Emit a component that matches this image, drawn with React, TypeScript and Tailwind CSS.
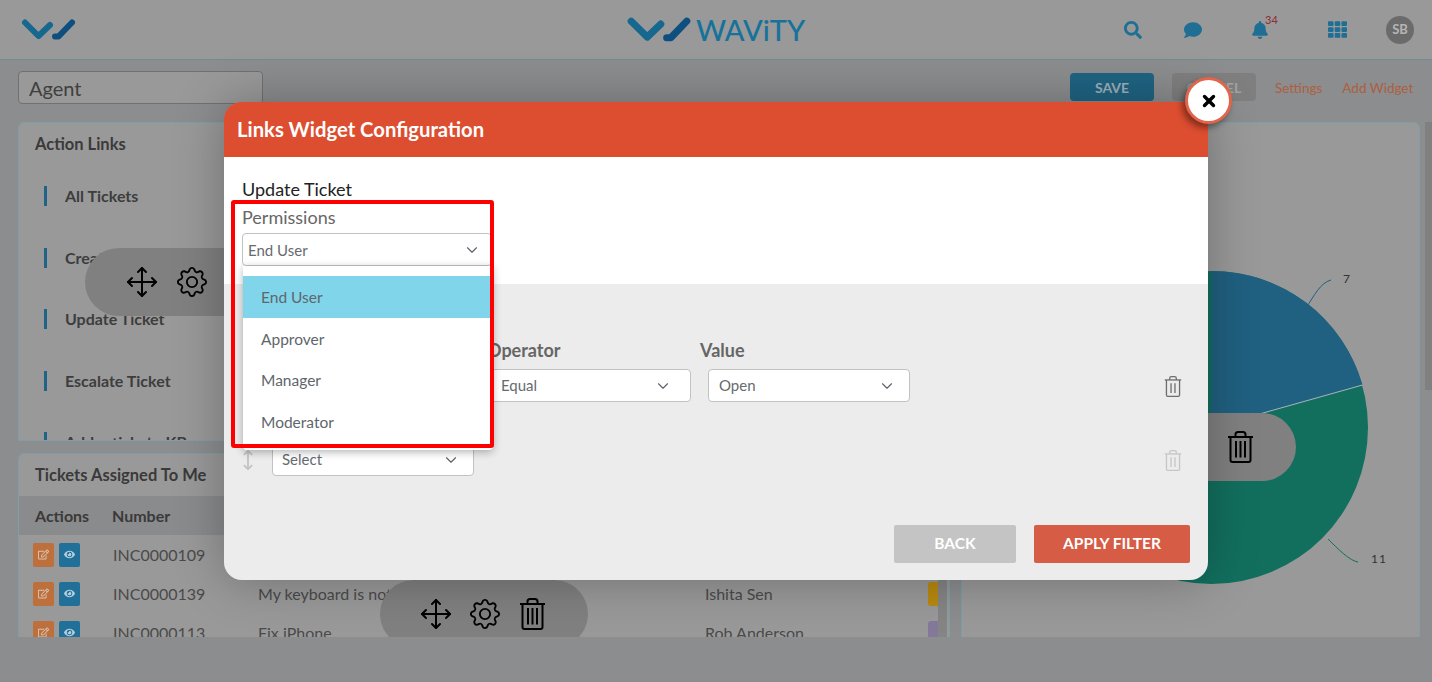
import { ChevronDown, X } from "lucide-react";
import { BsGear } from "react-icons/bs";
import { FaBell, FaComment, FaEye, FaRegEdit, FaSearch, FaTh } from "react-icons/fa";

const LINKS = ["All Tickets", "Create Ticket", "Update Ticket", "Escalate Ticket", "Add article to KB"];

const TICKETS = [
  { number: "INC0000109", title: "", owner: "", badge: "" },
  { number: "INC0000139", title: "My keyboard is not working", owner: "Ishita Sen", badge: "bg-[#b98a10]" },
  { number: "INC0000113", title: "Fix iPhone", owner: "Rob Anderson", badge: "bg-[#85799a]" },
];

function Logo({ className }: { className: string }) {
  return (
    <svg viewBox="0 0 54 22" className={className} fill="none" strokeLinecap="round" strokeLinejoin="round">
      <path d="M3.5 3.5 L17 17 L28.5 6" stroke="#17688f" strokeWidth="6" />
      <path d="M33.5 17.5 L37 17.5 L50.5 3.5" stroke="#0f4f80" strokeWidth="6" />
    </svg>
  );
}

function MoveIcon() {
  return (
    <svg viewBox="0 0 32 32" className="h-8 w-8" fill="none" stroke="currentColor" strokeWidth="2" strokeLinecap="round" strokeLinejoin="round">
      <path d="M16 2 V30 M2 16 H30" />
      <path d="M12 6 L16 2 L20 6 M12 26 L16 30 L20 26 M6 12 L2 16 L6 20 M26 12 L30 16 L26 20" />
    </svg>
  );
}

function TrashIcon({ className, barCount = 3 }: { className: string; barCount?: 2 | 3 }) {
  return (
    <svg viewBox="0 0 27 32" className={className} fill="none" stroke="currentColor" strokeWidth="2">
      <path d="M1 6 H26" />
      <path d="M8.5 6 V3.5 Q8.5 1 11 1 H16 Q18.5 1 18.5 3.5 V6" />
      <path d="M3.5 6 V29 Q3.5 31 5.5 31 H21.5 Q23.5 31 23.5 29 V6" />
      {barCount === 3 ? (
        <path d="M9 10 V26.5 M13.5 10 V26.5 M18 10 V26.5" />
      ) : (
        <path d="M10.5 11 V26 M16.5 11 V26" />
      )}
    </svg>
  );
}

function Pill({ className, children }: { className: string; children: React.ReactNode }) {
  return (
    <div className={`absolute z-10 flex h-[68px] items-center rounded-full bg-[#808080] text-black ${className}`}>
      {children}
    </div>
  );
}

function SelectBox({ label, className }: { label: string; className: string }) {
  return (
    <div
      className={`flex h-[33px] items-center justify-between rounded-[4px] border border-[#c2c2c2] bg-white text-[15px] text-[#666b70] ${className}`}
    >
      <span>{label}</span>
      <ChevronDown size={18} strokeWidth={1.5} className="text-[#5c6268]" />
    </div>
  );
}

function UpDownArrow() {
  return (
    <svg viewBox="0 0 12 24" className="h-[22px] w-[12px]" fill="none" stroke="#c4c4c4" strokeWidth="2">
      <path d="M6 2 V22 M1.5 6.5 L6 2 L10.5 6.5 M1.5 17.5 L6 22 L10.5 17.5" />
    </svg>
  );
}

function ActionLinksCard() {
  return (
    <section className="relative h-[319px] shrink-0 overflow-hidden rounded-t-[6px] border border-[#7f9ea9] bg-[#999999]">
      <h2 className="pl-4 pt-[10px] text-[16.5px] leading-[22px] font-bold text-[#3a3a3a]">Action Links</h2>
      <ul className="mt-[31px] flex flex-col gap-[41.5px] pl-[25px]">
        {LINKS.map((link) => (
          <li key={link} className="flex h-5 items-center gap-[18px]">
            <span className="h-5 w-[3px] bg-[#1f6487]" />
            <span className="text-[16px] font-bold text-[#3d3d3d]">{link}</span>
          </li>
        ))}
      </ul>
      <Pill className="left-[66px] top-[125px] w-[190px] gap-[19px] pl-[41px]">
        <MoveIcon />
        <BsGear size={30} />
      </Pill>
    </section>
  );
}

function TicketsCard() {
  return (
    <section className="relative grow rounded-t-[6px] border border-[#7f9ea9] bg-[#999999]">
      <h2 className="flex h-[42px] items-center pl-4 pt-px text-[16.5px] font-bold text-[#3a3a3a]">Tickets Assigned To Me</h2>
      <div className="grid h-[39px] grid-cols-[77px_146px_447px_224px] items-center bg-[#8a8b8d] pl-4 pt-px text-[16px] font-bold text-[#3a3a3a]">
        <span>Actions</span>
        <span>Number</span>
      </div>
      {TICKETS.map((t) => (
        <div
          key={t.number}
          className="grid h-[39px] grid-cols-[79px_146px_447px_223px_11px] items-center pl-[14px] text-[16px] text-[#4a4a4a]"
        >
          <div className="flex gap-[5px]">
            <span className="flex h-6 w-[21px] items-center justify-center rounded-[2px] bg-[#bd6f3c] text-[#d9c5b5]">
              <FaRegEdit size={11} />
            </span>
            <span className="flex h-6 w-[21px] items-center justify-center rounded-[2px] bg-[#20709a] text-[#b5cfdc]">
              <FaEye size={11} />
            </span>
          </div>
          <span className="pl-[1px]">{t.number}</span>
          <span className="whitespace-nowrap">{t.title}</span>
          <span>{t.owner}</span>
          {t.badge ? <span className={`h-6 w-[11px] rounded-l-[3px] ${t.badge}`} /> : <span />}
        </div>
      ))}
      <div className="absolute bottom-0 right-[2px] top-[42px] w-[9px] bg-[#858585]" />
      <Pill className="left-[361px] top-[126px] w-[208px] gap-[18px] pl-[40px]">
        <MoveIcon />
        <BsGear size={30} />
        <TrashIcon className="ml-px h-[32px] w-[27px]" />
      </Pill>
    </section>
  );
}

function ChartCard() {
  return (
    <section className="relative h-[560px] w-[459px] shrink-0 rounded-t-[6px] border border-[#7f9ea9] bg-[#999999]">
      <svg viewBox="0 0 457 558" className="block h-[558px] w-[457px]">
        <circle cx="249.5" cy="304.5" r="156.5" fill="#126f5e" />
        <path d="M249.5 304.5 V148 A156.5 156.5 0 0 1 400.5 262 Z" fill="#206080" />
        <path d="M249.5 304.5 L400.5 262" fill="none" stroke="#a9b4b8" strokeWidth="1" />
        <path d="M344 185 C352 173 358 160 369 157" fill="none" stroke="#206080" />
        <path d="M366 416 C376 426 388 438 396 439" fill="none" stroke="#126f5e" />
        <text x="381" y="160" fontSize="12" fill="#333">7</text>
        <text x="409" y="440" fontSize="12" fill="#333" letterSpacing="1">11</text>
      </svg>
      <Pill className="left-[163px] top-[290px] w-[171px] pl-[102px]">
        <TrashIcon className="h-[32px] w-[27px]" />
      </Pill>
    </section>
  );
}

function ConfigModal() {
  return (
    <div className="absolute left-[224px] top-[102px] z-20 flex h-[478px] w-[984px] flex-col rounded-[18px] shadow-[0_0_50px_rgba(0,0,0,0.28)]">
      <header className="flex h-[55px] shrink-0 items-center rounded-t-[18px] bg-[#dd4d2f] pl-[13px] text-[20.25px] font-bold text-white">
        Links Widget Configuration
      </header>

      <div className="h-[127px] shrink-0 bg-white pl-[18px] pt-[21px]">
        <div className="text-[18px] leading-[22px] text-[#222222]">Update Ticket</div>
        <div className="mt-[6px] text-[18px] leading-[22px] text-[#666666]">Permissions</div>
        <SelectBox label="End User" className="mt-[5px] w-[250px] pl-[5px] pr-[10px] pt-px" />
      </div>

      <div className="grow rounded-b-[18px] bg-[#ececec] pl-[18px] pr-[18px] pt-[55px]">
        <div className="flex items-end">
          <div className="flex h-[33px] w-[30px] items-center">
            <UpDownArrow />
          </div>
          <div className="mr-[15px] w-[202px]">
            <SelectBox label="" className="w-[202px] pl-[9px] pr-[12px]" />
          </div>
          <div className="mr-[17px] w-[202px]">
            <div className="-ml-[2px] mb-2 text-[18px] leading-[22px] font-bold text-[#666666]">Operator</div>
            <SelectBox label="Equal" className="w-[202px] pl-[11px] pr-[18px]" />
          </div>
          <div className="w-[202px]">
            <div className="-ml-2 mb-2 text-[18px] leading-[22px] font-bold text-[#666666]">Value</div>
            <SelectBox label="Open" className="w-[202px] pl-[10px] pr-[13px]" />
          </div>
          <div className="ml-auto flex h-[33px] items-center pr-[8px] pt-[2px] text-[#6e6e6e]">
            <TrashIcon className="h-[21px] w-[18px]" barCount={2} />
          </div>
        </div>

        <div className="mt-[41px] flex items-center">
          <div className="flex h-[33px] w-[30px] items-center">
            <UpDownArrow />
          </div>
          <SelectBox label="Select" className="w-[202px] pl-[9px] pr-[13px] text-[#7c8287]" />
          <div className="ml-auto flex h-[33px] items-center pr-[8px] pt-[2px] text-[#c6c6c6]">
            <TrashIcon className="h-[21px] w-[18px]" barCount={2} />
          </div>
        </div>

        <div className="mt-[49px] flex justify-end gap-[18px] text-[15.5px] font-bold text-white">
          <button className="h-[38px] w-[122px] rounded-[2px] bg-[#c4c4c4]">BACK</button>
          <button className="h-[38px] w-[156px] rounded-[2px] bg-[#d65c45]">APPLY FILTER</button>
        </div>
      </div>

      {/* open permissions menu */}
      <ul className="absolute left-[19px] top-[164px] h-[184px] w-[250px] rounded-b-[4px] bg-white pt-[10px] text-[15.5px] text-[#5f666c] shadow-[0_2px_8px_rgba(0,0,0,0.3)]">
        <li className="flex h-[42px] items-center bg-[#80d5ea] pl-[18px] pt-[2px]">End User</li>
        <li className="flex h-[41px] items-center pl-[18px] pt-[2px]">Approver</li>
        <li className="flex h-[42px] items-center pl-[18px] pt-[2px]">Manager</li>
        <li className="flex h-[41px] items-center pl-[18px] pt-[2px]">Moderator</li>
      </ul>

      {/* callout round the permissions field */}
      <div className="absolute left-[7px] top-[98px] h-[248px] w-[263px] rounded-[3px] border-[4px] border-[#ff0000]" />

      <button className="absolute left-[961px] top-[-25px] flex h-[47px] w-[47px] items-center justify-center rounded-full border-[3px] border-[#e0654a] bg-white text-black shadow-[-3px_4px_6px_rgba(0,0,0,0.4)]">
        <X size={18} strokeWidth={4.5} />
      </button>
    </div>
  );
}

export default function App() {
  return (
    <div className="relative flex h-[682px] w-[1432px] flex-col overflow-hidden bg-[#8c8d8f] font-['Lato','Liberation_Sans',sans-serif]">
      <header className="flex h-[60px] shrink-0 items-center border-b border-[#6f8c96] bg-[#999999] pl-[21px] pr-[18px]">
        <Logo className="h-[22px] w-[55px]" />
        <div className="ml-[551px] flex items-center gap-[5px]">
          <Logo className="h-[26px] w-[64px]" />
          <span className="text-[29px] leading-none font-medium text-[#17729a]">WAViTY</span>
        </div>
        <div className="ml-auto flex items-center text-[#1f6f95]">
          <FaSearch size={18} />
          <FaComment size={18} className="ml-[42px]" />
          <span className="relative ml-[49px]">
            <FaBell size={18} />
            <span className="absolute left-[14px] top-[-7px] text-[11px] leading-none text-[#8f2d36]">34</span>
          </span>
          <FaTh size={19} className="ml-[59px]" />
          <span className="ml-[39px] flex h-7 w-7 items-center justify-center rounded-full bg-[#6b6b6b] text-[13px] font-bold text-[#b5b5b5]">
            SB
          </span>
        </div>
      </header>

      <div className="flex h-[62px] shrink-0 items-start pl-[18px] pt-[11px]">
        <div className="flex h-[33px] w-[245px] items-center rounded-[4px] border border-[#707172] bg-[#999999] pl-[10px] text-[20px] text-[#3f3f3f]">
          Agent
        </div>
        <button className="ml-[807px] mt-[2px] h-[28px] w-[84px] rounded-[4px] bg-[#1f6483] text-[14px] font-bold text-[#9fb0b9]">
          SAVE
        </button>
        <button className="ml-[18px] mt-[2px] h-[28px] w-[84px] rounded-[4px] bg-[#7f7f7f] text-[14px] font-bold text-[#a3a3a3]">
          CANCEL
        </button>
        <span className="ml-[19px] mt-[7px] text-[13.5px] text-[#ad5f40]">Settings</span>
        <span className="ml-[20px] mt-[7px] text-[13.5px] text-[#ad5f40]">Add Widget</span>
      </div>

      <main className="flex h-[515px] shrink-0 overflow-hidden pl-[18px]">
        <div className="flex w-[932px] shrink-0 flex-col gap-[12px]">
          <ActionLinksCard />
          <TicketsCard />
        </div>
        <div className="ml-[11px]">
          <ChartCard />
        </div>
        <div className="ml-[5px] h-[268px] w-[7px] shrink-0 bg-[#808080]" />
      </main>

      <ConfigModal />
    </div>
  );
}
